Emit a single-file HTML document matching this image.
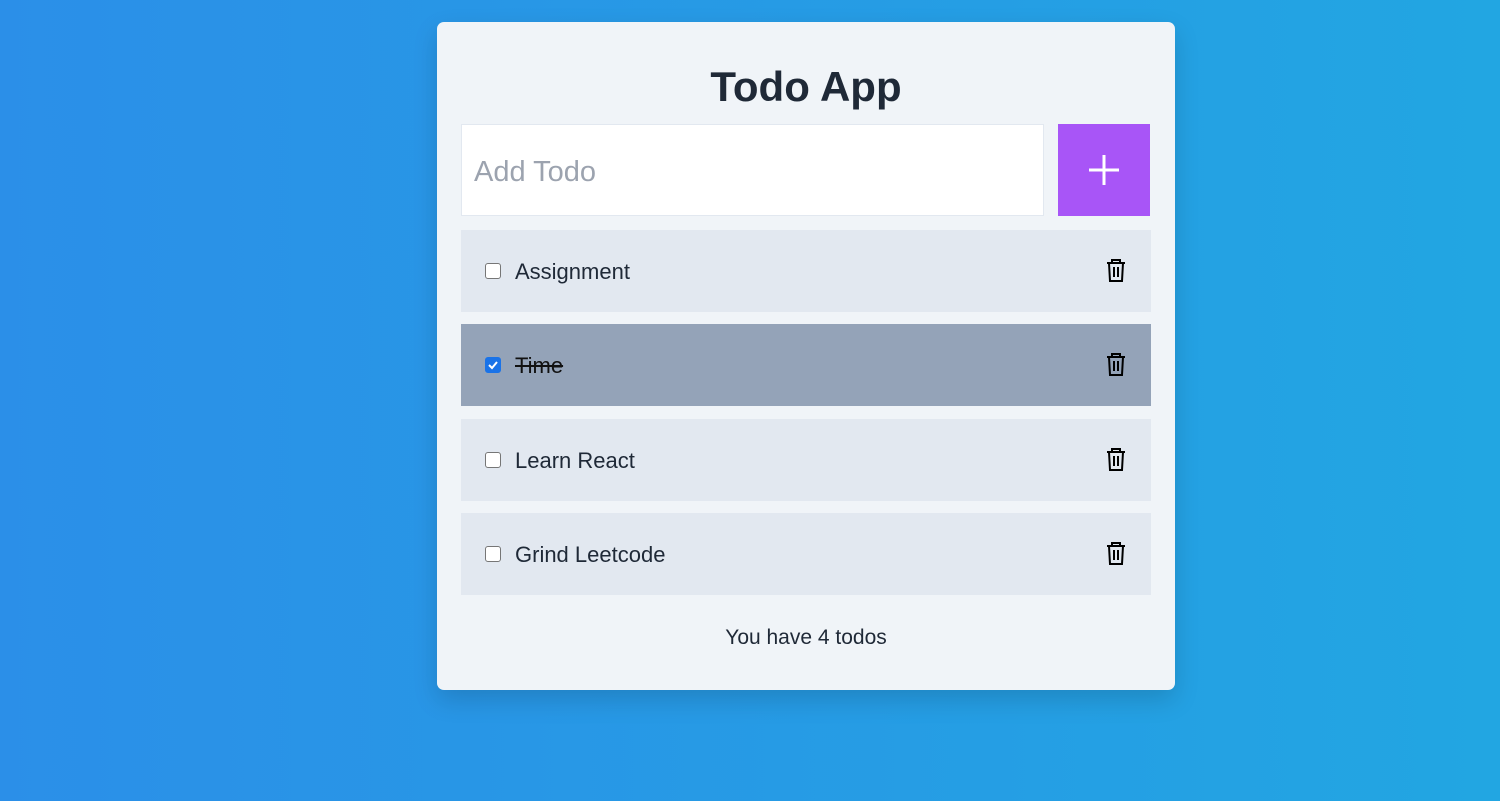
<!DOCTYPE html>
<html><head><style>
html,body{margin:0;padding:0;width:1500px;height:801px;overflow:hidden}
body{background:linear-gradient(90deg,#2b8fe8,#22a6e2);font-family:"Liberation Sans",sans-serif;position:relative}
.card{position:absolute;left:437px;top:22px;width:738px;height:668px;background:#f0f4f8;border-radius:7px;box-shadow:0 10px 25px rgba(0,0,0,.15)}
h1{position:absolute;top:66px;left:437px;width:738px;margin:0;text-align:center;font-size:42px;font-weight:bold;color:#1f2937;line-height:1}
.inp{position:absolute;left:461px;top:124px;width:583px;height:92px;background:#fff;border:1px solid #e2e8f0;box-sizing:border-box}
.inp span{position:absolute;left:12px;top:31px;font-size:29px;color:#9ca3af}
.btn{position:absolute;left:1058px;top:124px;width:92px;height:92px;background:#a855f7}
.row{position:absolute;left:461px;width:690px;height:82px;background:#e2e8f0}
.row.done{background:#94a3b8}
.cb{position:absolute;left:24px;top:33px;width:16px;height:16px;border:1px solid #767676;border-radius:3px;background:#fff;box-sizing:border-box}
.done .cb{background:#1a73e8;border-color:#1a73e8}
.txt{position:absolute;left:54px;top:29px;font-size:22px;color:#1f2937}
.done .txt{text-decoration:line-through;color:#111}
.tr{position:absolute;left:644px;top:29px}
.foot{position:absolute;top:626px;left:437px;width:738px;text-align:center;font-size:21px;color:#1f2937}
</style></head><body>
<div class="card"></div>
<h1>Todo App</h1>
<div class="inp"><span>Add Todo</span></div>
<div class="btn"><svg width="92" height="92"><path d="M46 31v30M31 46h30" stroke="#fff" stroke-width="3"/></svg></div>
<div class="row" style="top:230px"><div class="cb"></div><div class="txt">Assignment</div><svg class="tr" width="22" height="24" viewBox="0 0 22 24"><path d="M2 4h18M7 4V1h8v3M4 4l1 18h12l1-18M9 8v10M13 8v10" fill="none" stroke="#000" stroke-width="2"/></svg></div>
<div class="row done" style="top:324px"><div class="cb"><svg width="14" height="14"><path d="M3 7l3 3 5-6" stroke="#fff" stroke-width="2" fill="none"/></svg></div><div class="txt">Time</div><svg class="tr" width="22" height="24" viewBox="0 0 22 24"><path d="M2 4h18M7 4V1h8v3M4 4l1 18h12l1-18M9 8v10M13 8v10" fill="none" stroke="#000" stroke-width="2"/></svg></div>
<div class="row" style="top:419px"><div class="cb"></div><div class="txt">Learn React</div><svg class="tr" width="22" height="24" viewBox="0 0 22 24"><path d="M2 4h18M7 4V1h8v3M4 4l1 18h12l1-18M9 8v10M13 8v10" fill="none" stroke="#000" stroke-width="2"/></svg></div>
<div class="row" style="top:513px"><div class="cb"></div><div class="txt">Grind Leetcode</div><svg class="tr" width="22" height="24" viewBox="0 0 22 24"><path d="M2 4h18M7 4V1h8v3M4 4l1 18h12l1-18M9 8v10M13 8v10" fill="none" stroke="#000" stroke-width="2"/></svg></div>
<div class="foot">You have 4 todos</div>
</body></html>
